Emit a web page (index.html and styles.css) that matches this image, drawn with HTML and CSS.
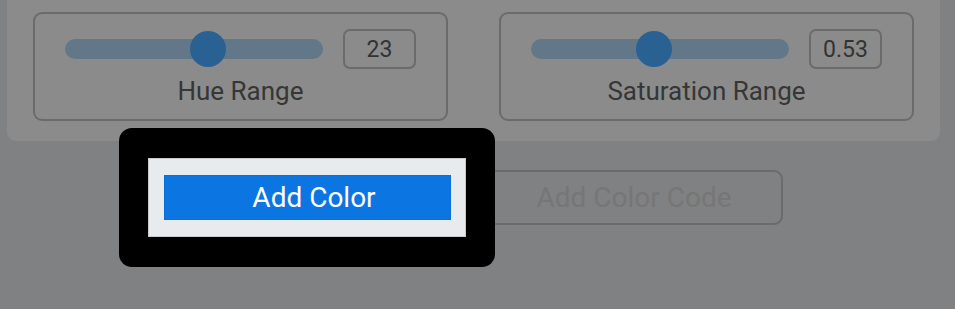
FILE: index.html
```html
<!DOCTYPE html>
<html>
<head>
<meta charset="utf-8">
<link rel="stylesheet" href="styles.css">
</head>
<body>
<div class="page">
  <section class="panel">
    <div class="card">
      <div class="row">
        <div class="track"><span class="thumb" style="left:55.4%"></span></div>
        <div class="num">23</div>
      </div>
      <div class="label">Hue Range</div>
    </div>
    <div class="card">
      <div class="row">
        <div class="track"><span class="thumb" style="left:47.7%"></span></div>
        <div class="num">0.53</div>
      </div>
      <div class="label">Saturation Range</div>
    </div>
  </section>
  <div class="actions">
    <div class="spotlight"><div class="spot-inner"></div></div>
    <button class="btn-primary">Add Color</button>
    <button class="btn-outline">Add Color Code</button>
  </div>
</div>
</body>
</html>
```

FILE: styles.css
```css
* { box-sizing: border-box; }
html, body { margin: 0; padding: 0; }
body {
  background: #808182;
  font-family: Roboto, "Noto Sans", "Liberation Sans", sans-serif;
  width: 955px;
  height: 309px;
  overflow: hidden;
}
.page { position: relative; }
.panel {
  margin-left: 7px;
  width: 933px;
  background: #8b8b8b;
  border-radius: 0 0 9px 9px;
  padding: 12px 26px 20px;
  display: grid;
  grid-template-columns: 415px 415px;
  column-gap: 51px;
}
.card {
  height: 109px;
  border: 2px solid #6b6b6b;
  border-radius: 9px;
  padding: 15px 30px 0;
  display: flex;
  flex-direction: column;
}
.row {
  display: flex;
  align-items: center;
  gap: 20px;
  height: 40px;
}
.track {
  position: relative;
  flex: 0 0 258px;
  height: 20px;
  border-radius: 10px;
  background: #627889;
}
.thumb {
  position: absolute;
  top: 50%;
  width: 36px;
  height: 36px;
  margin: -18px 0 0 -18px;
  border-radius: 50%;
  background: #2a6193;
}
.num {
  flex: 0 0 73px;
  height: 40px;
  border: 2px solid #6b6b6b;
  border-radius: 7px;
  display: flex;
  align-items: center;
  justify-content: center;
  font-size: 23px;
  color: #333;
}
.label {
  margin-top: 7px;
  text-align: center;
  font-size: 26px;
  line-height: 30px;
  color: #363636;
}
.actions {
  position: relative;
  display: flex;
  align-items: center;
  gap: 34px;
  margin-top: 29px;
  padding-left: 164px;
}
.btn-primary {
  position: relative;
  z-index: 2;
  width: 287px;
  height: 45px;
  border: 1px solid #0a6fd8;
  background: #0b75e1;
  color: #fff;
  font-family: inherit;
  font-size: 28px;
  padding: 0 0 0 13px;
}
.btn-outline {
  width: 298px;
  height: 55px;
  border: 2px solid #6b6b6b;
  border-radius: 9px;
  background: transparent;
  color: #767676;
  font-family: inherit;
  font-size: 28px;
  padding: 0;
}
.spotlight {
  position: absolute;
  z-index: 1;
  left: 119px;
  top: -42px;
  width: 376px;
  height: 139px;
  background: #000;
  border-radius: 13px;
  padding: 30px 29px;
}
.spot-inner {
  width: 100%;
  height: 100%;
  background: #e8ebee;
  border: 1px solid #c7cacd;
}
```
